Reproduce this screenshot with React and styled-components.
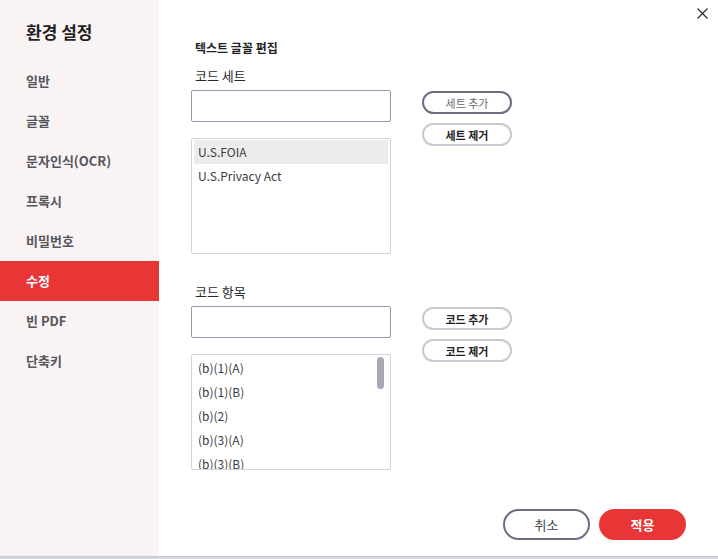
import React from "react";
import styled, { createGlobalStyle } from "styled-components";

const GlobalStyle = createGlobalStyle`
  body {
    margin: 0;
    background: #ffffff;
    font-family: "Noto Sans CJK KR", "Noto Sans", sans-serif;
  }
`;

const Screen = styled.div`
  width: 718px;
  height: 559px;
  overflow: hidden;
  background: #d4d4dc;
`;

const Dialog = styled.div`
  position: relative;
  display: flex;
  width: 718px;
  height: 557px;
  background: #ffffff;
  border-bottom: 1px solid #c9c9d2;
  box-sizing: border-box;
`;

const Sidebar = styled.div`
  width: 159px;
  flex-shrink: 0;
  background: #f9f3f3;
  padding-top: 20px;
  box-sizing: border-box;
`;

const SideTitle = styled.div`
  height: 24px;
  line-height: 24px;
  padding-left: 26px;
  font-size: 17px;
  font-weight: 700;
  color: #1f1f24;
  margin-bottom: 17px;
`;

const MenuItem = styled.div`
  height: 40px;
  line-height: 40px;
  padding-left: 26px;
  font-size: 13px;
  font-weight: 700;
  color: ${(p) => (p.$active ? "#ffffff" : "#55565e")};
  background: ${(p) => (p.$active ? "#e83535" : "transparent")};
`;

const Main = styled.div`
  flex: 1;
  display: flex;
  flex-direction: column;
  padding: 40px 32px 16px 32px;
  box-sizing: border-box;
`;

const Heading = styled.div`
  height: 16px;
  line-height: 16px;
  margin-left: 4px;
  font-size: 12px;
  font-weight: 700;
  color: #1f1f24;
`;

const Label = styled.div`
  height: 18px;
  line-height: 18px;
  margin-left: 4px;
  margin-top: ${(p) => p.$top}px;
  margin-bottom: 5px;
  font-size: 13px;
  color: #2a2a30;
`;

const Row = styled.div`
  display: grid;
  grid-template-columns: 200px 90px;
  column-gap: 31px;
  align-items: start;
`;

const Column = styled.div`
  display: flex;
  flex-direction: column;
`;

const TextInput = styled.input`
  height: 32px;
  width: 200px;
  box-sizing: border-box;
  border: 1px solid #9597ab;
  border-radius: 2px;
  outline: none;
  padding: 0 6px;
  font-family: inherit;
  font-size: 12px;
`;

const ListBox = styled.div`
  position: relative;
  margin-top: 16px;
  height: 116px;
  box-sizing: border-box;
  border: 1px solid #d2d2da;
  border-radius: 2px;
  padding: 1px 2px;
  overflow: hidden;
`;

const ListItem = styled.div`
  height: 24px;
  line-height: 24px;
  padding-left: 4px;
  font-size: 12px;
  color: #3c3c44;
  background: ${(p) => (p.$selected ? "#ececec" : "transparent")};
`;

const Thumb = styled.div`
  position: absolute;
  top: 2px;
  right: 6px;
  width: 7px;
  height: 32px;
  border-radius: 4px;
  background: #a7a9b7;
`;

const Buttons = styled.div`
  display: flex;
  flex-direction: column;
  gap: 9px;
  padding-top: 1px;
`;

const SmallButton = styled.button`
  height: 23px;
  width: 90px;
  box-sizing: border-box;
  border-radius: 12px;
  border: 2px solid ${(p) => (p.$focused ? "#6b6e82" : "#c9c9d2")};
  background: #ffffff;
  font-family: inherit;
  font-size: 11px;
  font-weight: ${(p) => (p.$focused ? 400 : 700)};
  color: ${(p) => (p.$focused ? "#6a6a72" : "#1f1f24")};
  padding: 0;
  cursor: pointer;
`;

const Footer = styled.div`
  margin-top: auto;
  display: flex;
  justify-content: flex-end;
  gap: 9px;
`;

const FooterButton = styled.button`
  width: 87px;
  height: 31px;
  box-sizing: border-box;
  border-radius: 16px;
  font-family: inherit;
  font-size: 13px;
  padding: 0;
  cursor: pointer;
  border: 2px solid ${(p) => (p.$primary ? "#e83535" : "#6b6e82")};
  background: ${(p) => (p.$primary ? "#e83535" : "#ffffff")};
  color: ${(p) => (p.$primary ? "#ffffff" : "#44444c")};
  font-weight: ${(p) => (p.$primary ? 700 : 400)};
`;

const CloseButton = styled.button`
  position: absolute;
  top: 7px;
  right: 9px;
  width: 13px;
  height: 13px;
  padding: 0;
  border: none;
  background: none;
  cursor: pointer;
  display: flex;
  align-items: center;
  justify-content: center;
`;

const menu = ["일반", "글꼴", "문자인식(OCR)", "프록시", "비밀번호", "수정", "빈 PDF", "단축키"];
const codeSets = ["U.S.FOIA", "U.S.Privacy Act"];
const codeItems = ["(b)(1)(A)", "(b)(1)(B)", "(b)(2)", "(b)(3)(A)", "(b)(3)(B)"];

export default function App() {
  return (
    <Screen>
      <GlobalStyle />
      <Dialog>
        <Sidebar>
          <SideTitle>환경 설정</SideTitle>
          {menu.map((m) => (
            <MenuItem key={m} $active={m === "수정"}>
              {m}
            </MenuItem>
          ))}
        </Sidebar>

        <Main>
          <Heading>텍스트 글꼴 편집</Heading>

          <Label $top={11}>코드 세트</Label>
          <Row>
            <Column>
              <TextInput />
              <ListBox>
                {codeSets.map((c, i) => (
                  <ListItem key={c} $selected={i === 0}>
                    {c}
                  </ListItem>
                ))}
              </ListBox>
            </Column>
            <Buttons>
              <SmallButton $focused>세트 추가</SmallButton>
              <SmallButton>세트 제거</SmallButton>
            </Buttons>
          </Row>

          <Label $top={29}>코드 항목</Label>
          <Row>
            <Column>
              <TextInput />
              <ListBox>
                {codeItems.map((c) => (
                  <ListItem key={c}>{c}</ListItem>
                ))}
                <Thumb />
              </ListBox>
            </Column>
            <Buttons>
              <SmallButton>코드 추가</SmallButton>
              <SmallButton>코드 제거</SmallButton>
            </Buttons>
          </Row>

          <Footer>
            <FooterButton>취소</FooterButton>
            <FooterButton $primary>적용</FooterButton>
          </Footer>
        </Main>

        <CloseButton aria-label="닫기">
          <svg width="11" height="11" viewBox="0 0 11 11">
            <path d="M0.5 0.5 L10.5 10.5 M10.5 0.5 L0.5 10.5" stroke="#2a2a30" strokeWidth="1.2" />
          </svg>
        </CloseButton>
      </Dialog>
    </Screen>
  );
}
